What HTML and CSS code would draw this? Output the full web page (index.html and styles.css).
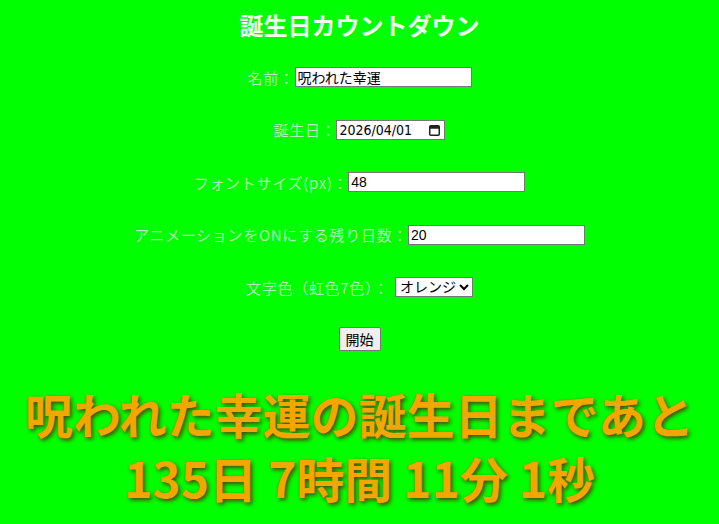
FILE: index.html
```html
<!DOCTYPE html>
<html lang="ja">
<head>
<meta charset="utf-8">
<title>誕生日カウントダウン</title>
<link rel="stylesheet" href="styles.css">
</head>
<body>
<h1 class="title">誕生日カウントダウン</h1>
<div class="form">
  <div class="row"><label class="lbl">名前：</label><input class="txt" type="text" value="呪われた幸運"></div>
  <div class="row"><label class="lbl">誕生日：</label><div class="date"><span class="dval">2026/04/01</span><svg class="cal" width="11" height="12" viewBox="0 0 11 12"><rect x="0.75" y="1.75" width="9.5" height="9.5" rx="1" fill="none" stroke="#222" stroke-width="1.5"/><rect x="0.75" y="1.75" width="9.5" height="3" fill="#222"/></svg></div></div>
  <div class="row"><label class="lbl">フォントサイズ(px)：</label><input class="txt" type="text" value="48"></div>
  <div class="row"><label class="lbl">アニメーションをONにする残り日数：</label><input class="txt" type="text" value="20"></div>
  <div class="row"><label class="lbl">文字色（虹色7色）：</label><select class="sel"><option>オレンジ</option></select></div>
  <div class="row brow"><button class="btn">開始</button></div>
</div>
<div class="countdown">呪われた幸運の誕生日まであと<br>135日 7時間 11分 1秒</div>
</body>
</html>
```
FILE: styles.css
```css
html, body { margin: 0; padding: 0; }
body {
  background: #00ff00;
  font-family: "Noto Sans CJK JP", "Noto Sans", sans-serif;
  text-align: center;
  width: 719px;
  height: 524px;
  overflow: hidden;
}
.title {
  margin: 10px 0 0;
  font-size: 24px;
  line-height: 30px;
  font-weight: bold;
  color: #f0fff0;
}
.form {
  display: flex;
  flex-direction: column;
  align-items: center;
  gap: 32.5px;
  margin-top: 27px;
}
.row {
  display: flex;
  align-items: center;
  justify-content: center;
  height: 20px;
}
.brow { height: 24px; margin-top: -2.5px; }
.lbl {
  font-size: 15px;
  color: #b0f4b0;
  letter-spacing: 0.7px;
}
input, select, button { font-family: "Liberation Sans", "Noto Sans CJK JP", sans-serif; }
.txt {
  width: 171px;
  height: 16px;
  padding: 1px 2px;
  border: 1px solid #767676;
  font-size: 14px;
  box-sizing: content-box;
  background: #fff;
  color: #000;
}
.date {
  display: flex;
  align-items: center;
  justify-content: space-between;
  width: 101px;
  height: 18px;
  padding: 0 4px 0 2px;
  border: 1px solid #767676;
  background: #fff;
  font-family: "DejaVu Sans Condensed", "Liberation Sans", sans-serif;
  font-size: 14px;
  color: #000;
}
.dval { letter-spacing: 0px; }
.cal { display: block; }
.sel {
  height: 20px;
  font-size: 14px;
  margin-left: 6px;
  border: 1px solid #767676;
  background: #fff;
  color: #000;
}
.btn {
  height: 24px;
  font-size: 14px;
  padding: 1px 6px;
  border: 1px solid #767676;
  border-radius: 2px;
  background: #efefef;
  color: #000;
}
.countdown {
  margin-top: 30px;
  font-family: "Noto Sans CJK JP", sans-serif;
  font-size: 48px;
  font-weight: bold;
  line-height: 64px;
  color: #f2a600;
  text-shadow: 2px 2px 4px #4a4000;
}
```
